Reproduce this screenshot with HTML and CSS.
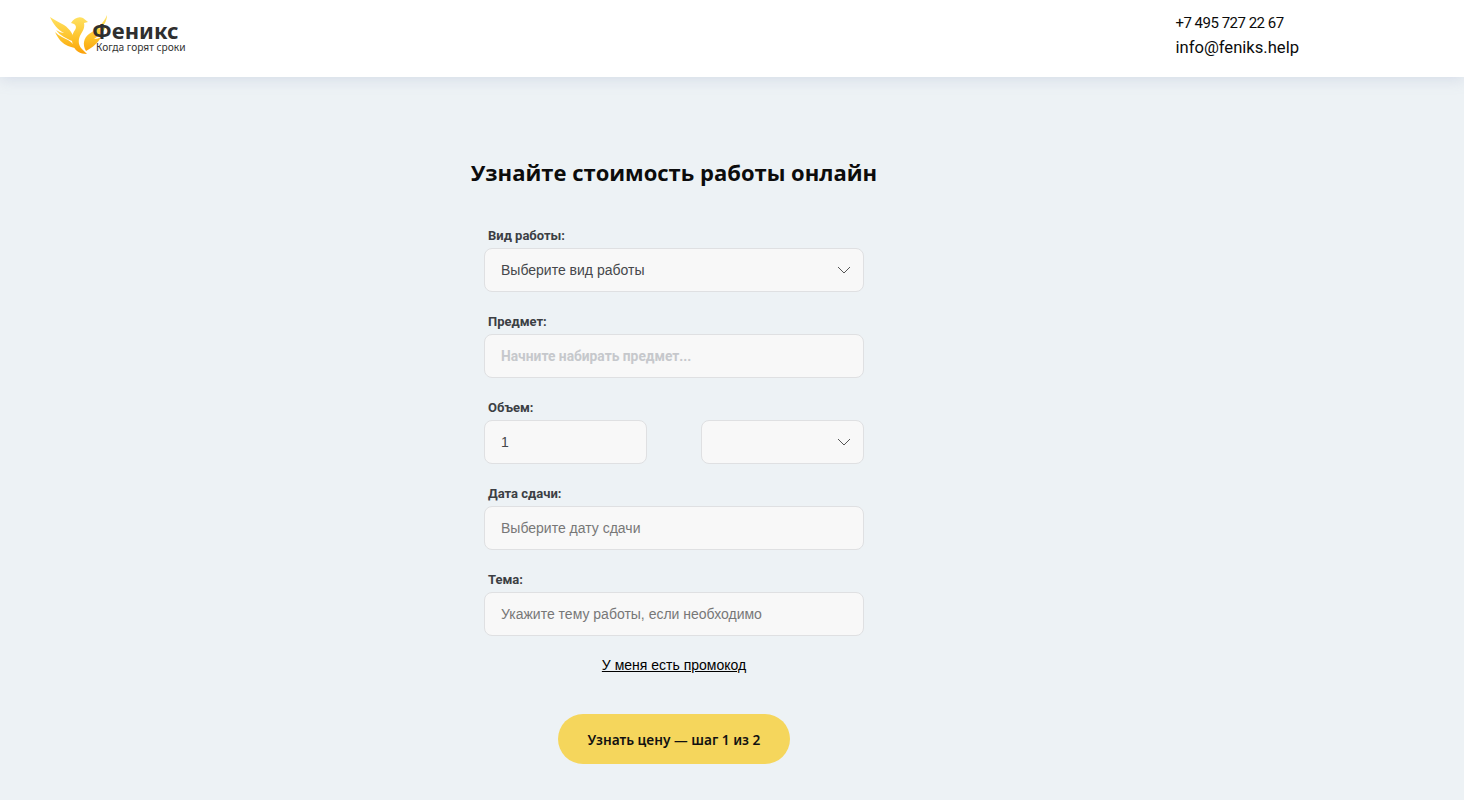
FILE: index.html
```html
<!DOCTYPE html>
<html lang="ru">
<head>
<meta charset="utf-8">
<title>Феникс</title>
<link rel="stylesheet" href="styles.css">
</head>
<body>
<header class="site-header">
  <a class="logo" href="#">
    <svg class="logo-mark" width="58" height="42" viewBox="0 0 58 42" aria-hidden="true">
      <defs>
        <linearGradient id="flame2" gradientUnits="userSpaceOnUse" x1="0" y1="4" x2="0" y2="40">
          <stop offset="0" stop-color="#ffe060"/>
          <stop offset=".6" stop-color="#fdc026"/>
          <stop offset="1" stop-color="#fb9f08"/>
        </linearGradient>
      </defs>
      <path fill="url(#flame2)" d="M0 3C4 6 9 8 14 11C20 15 24 21 25 29C21 26 17 25 14 23C11 21 8 19 6 16C9 18 12 19 14 19C8 16 3 10 0 3Z"/>
      <path fill="url(#flame2)" d="M5 18C9 22 14 24 18 26C21 28 24 30 25 34C22 33 20 33 18 32C13 30 8 25 5 18Z"/>
      <path fill="url(#flame2)" d="M21 9C24 4 29 2 33 4L38 8L34 9C35 13 33 17 31 20C28 25 28 30 31 34L37 40C30 40 25 37 23 31C21 25 22 20 25 16C27 13 26 10 21 9Z"/>
      <path fill="url(#flame2)" d="M57 1C57 7 54 12 49 15C52 15 54 14 56 12C54 18 49 22 44 25C47 25 49 24 51 23C48 29 43 33 36 37C32 30 34 24 39 20C46 16 54 9 57 1Z"/>
    </svg>
    <span class="logo-text">
      <span class="logo-name">Феникс</span>
      <span class="logo-tag">Когда горят сроки</span>
    </span>
  </a>
  <div class="contacts">
    <a class="phone" href="#">+7 495 727 22 67</a>
    <a class="email" href="#">info@feniks.help</a>
  </div>
</header>

<main class="page">
  <section class="calc">
    <h1 class="calc-title">Узнайте стоимость работы онлайн</h1>
    <form class="calc-form">
      <div class="field">
        <div class="field-label">Вид работы:</div>
        <div class="control control-select">
          <span class="value">Выберите вид работы</span>
          <svg class="chevron" width="14" height="8" viewBox="0 0 14 8"><path d="M1 1l6 6 6-6" fill="none" stroke="#555" stroke-width="1"/></svg>
        </div>
      </div>
      <div class="field">
        <div class="field-label">Предмет:</div>
        <div class="control"><span class="placeholder-bold">Начните набирать предмет...</span></div>
      </div>
      <div class="field">
        <div class="field-label">Объем:</div>
        <div class="split">
          <div class="control"><span class="value">1</span></div>
          <div class="control control-select">
            <span class="value"></span>
            <svg class="chevron" width="14" height="8" viewBox="0 0 14 8"><path d="M1 1l6 6 6-6" fill="none" stroke="#555" stroke-width="1"/></svg>
          </div>
        </div>
      </div>
      <div class="field">
        <div class="field-label">Дата сдачи:</div>
        <div class="control"><span class="placeholder">Выберите дату сдачи</span></div>
      </div>
      <div class="field">
        <div class="field-label">Тема:</div>
        <div class="control"><span class="placeholder">Укажите тему работы, если необходимо</span></div>
      </div>
      <a class="promo" href="#">У меня есть промокод</a>
      <button class="submit" type="button">Узнать цену — шаг 1 из 2</button>
    </form>
  </section>
</main>
</body>
</html>
```
FILE: styles.css
```css
* { box-sizing: border-box; }
html, body { margin: 0; height: 800px; overflow: hidden; }
body {
  background: #edf2f5;
  font-family: "Liberation Sans", Arial, sans-serif;
  color: #000;
}
a { color: inherit; text-decoration: none; }

.site-header {
  height: 77px;
  background: #fff;
  box-shadow: 0 2px 14px rgba(140, 150, 190, .25);
  display: flex;
  justify-content: space-between;
  padding: 0 165px 0 50px;
  position: relative;
}
.logo { display: flex; align-items: flex-start; padding-top: 14px; height: 77px; }
.logo-mark { flex: none; margin-right: -16px; }
.logo-text { display: flex; flex-direction: column; padding-top: 5px; }
.logo-name {
  font: 700 22px/22px "Noto Sans", sans-serif;
  color: #2f2f2f;
}
.logo-tag {
  font: 400 10.2px/12px "Noto Sans", sans-serif;
  color: #333;
  margin-left: 4px;
}

.contacts { display: flex; flex-direction: column; padding-top: 12px; font-family: Roboto, "Noto Sans", sans-serif; color: #0b0b0b; }
.phone { font-size: 15px; line-height: 22px; height: 24px; letter-spacing: -.5px; }
.email { font-size: 16.6px; line-height: 23px; }

.page { display: flex; justify-content: center; padding-right: 116px; }
.calc { width: 420px; display: flex; flex-direction: column; align-items: center; padding-top: 77px; }
.calc-title {
  margin: 0;
  font: 700 22px/36px "Open Sans", "Noto Sans", sans-serif;
  color: #0c0c0c;
  white-space: nowrap;
}
.calc-form { width: 380px; margin-top: 36px; display: flex; flex-direction: column; }

.field { margin-bottom: 20px; }
.field-label {
  font: 700 13px/20px Roboto, "Noto Sans", sans-serif;
  color: #3c3f44;
  padding-left: 4px;
  height: 22px;
}
.control {
  height: 44px;
  background: #f8f8f8;
  border: 1px solid #dfe0e2;
  border-radius: 8px;
  display: flex;
  align-items: center;
  justify-content: space-between;
  padding: 0 16px;
  font-size: 14px;
}
.control-select { padding-right: 12px; }
.value { color: #45474b; }
.placeholder { color: #777; }
.placeholder-bold { color: #c6c8cc; font: 700 13.8px Roboto, "Noto Sans", sans-serif; }
.split { display: grid; grid-template-columns: 163px 163px; justify-content: space-between; }

.promo {
  align-self: center;
  font-size: 14px;
  line-height: 18px;
  text-decoration: underline;
}
.submit {
  align-self: center;
  width: 232px;
  height: 50px;
  margin-top: 40px;
  padding-top: 2px;
  border: 0;
  border-radius: 25px;
  background: #f5d65c;
  color: #111;
  font: 600 13.7px "Noto Sans", sans-serif;
}
```
